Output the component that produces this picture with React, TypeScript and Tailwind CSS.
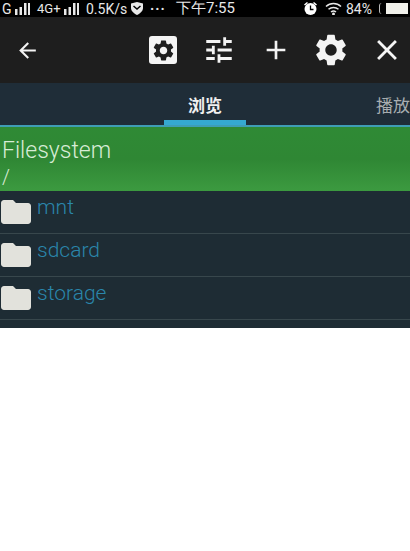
import { MdAdd, MdArrowBack, MdClose, MdFolder, MdSettings, MdTune } from 'react-icons/md';

const folders = ['mnt', 'sdcard', 'storage'];

function Bars() {
  return (
    <svg width="15" height="12" viewBox="0 0 15 12" className="fill-[#e8e8e8]">
      <rect x="0" y="6" width="2.500" height="6" />
      <rect x="4.500" y="4" width="2.500" height="8" />
      <rect x="9" y="0" width="2.500" height="12" />
      <rect x="13" y="0" width="2" height="12" />
    </svg>
  );
}

function StatusBar() {
  return (
    <div className="flex h-[17px] items-center overflow-hidden bg-black text-[14px] leading-none text-[#e8e8e8]">
      <span className="ml-[2px] w-[12px] shrink-0">G</span>
      <span className="ml-[1px]"><Bars /></span>
      <span className="ml-[7px] w-[25px] shrink-0 text-[13px]">4G+</span>
      <span className="ml-[2px]"><Bars /></span>
      <span className="ml-[7px] w-[44px] shrink-0">0.5K/s</span>
      <svg width="14" height="13" viewBox="0 0 14 13" className="shrink-0 fill-[#e8e8e8]">
        <path d="M1 1.500 7 0l6 1.500V6c0 3-3 5.500-6 7-3-1.500-6-4-6-7z" />
        <path d="M3.500 4 7 7l3.500-3" fill="none" stroke="#000" strokeWidth="1.500" />
      </svg>
      <span className="ml-[6px] w-[18px] shrink-0 font-bold tracking-[1px]">···</span>
      <span className="ml-[8px] w-[60px] shrink-0 text-[15px]">下午7:55</span>
      <svg width="15" height="15" viewBox="0 0 15 15" className="ml-[67px] shrink-0 fill-white">
        <circle cx="7.500" cy="8" r="6" />
        <path d="M1 3.500 4 1l1 1-3 2.500zM14 3.500 11 1l-1 1 3 2.500z" />
        <path d="M7.500 4.500V8.500H10.500" fill="none" stroke="#000" strokeWidth="1.300" />
      </svg>
      <svg width="18" height="13" viewBox="0 0 18 13" className="ml-[7px] shrink-0" fill="none" stroke="#e8e8e8" strokeWidth="1.500">
        <path d="M1 4.500a11 11 0 0 1 15 0" />
        <path d="M3.500 7.300a7.500 7.500 0 0 1 10 0" />
        <path d="M6 10a4 4 0 0 1 5 0" />
        <circle cx="8.500" cy="12" r="0.700" fill="#e8e8e8" />
      </svg>
      <span className="ml-[3px] w-[28px] shrink-0">84%</span>
      <div className="ml-[5px] flex h-[11px] w-[29px] shrink-0 justify-end rounded-l-[3px] border-l border-[#bbbbbb] bg-black">
        <div className="w-[22px] bg-[#f0f0ea]" />
      </div>
    </div>
  );
}

function Toolbar() {
  return (
    <div className="flex h-[66px] items-center bg-[#1e1e1e] text-[#f4f4f4]">
      <MdArrowBack className="ml-[15px] shrink-0 text-[25px]" />
      <div className="ml-[109px] flex h-[28px] w-[28px] shrink-0 items-center justify-center rounded-[3px] bg-[#f4f4f4]">
        <MdSettings className="text-[25px] text-[#1e1e1e]" />
      </div>
      <MdTune className="ml-[25px] shrink-0 text-[34px]" />
      <MdAdd className="ml-[24px] shrink-0 text-[32px]" />
      <MdSettings className="ml-[20px] shrink-0 text-[38px]" />
      <MdClose className="ml-[20px] shrink-0 text-[34px]" />
    </div>
  );
}

function Tabs() {
  return (
    <div className="h-[44px] overflow-hidden border-b-2 border-[#3f9db5] bg-[#1f2d38]">
      <div className="flex h-[42px] pl-[164px] font-['Noto_Sans_CJK_SC',sans-serif] text-[17px]">
        <div className="flex w-[82px] shrink-0 justify-center border-b-[5px] border-[#35a9d0] pt-[11px] leading-[22px] font-bold text-[#f0f0f0]">
          浏览
        </div>
        <div className="ml-[130px] w-[82px] shrink-0 pt-[11px] leading-[22px] text-[#a8adb0]">播放</div>
      </div>
    </div>
  );
}

export default function App() {
  return (
    <div className="h-[551px] w-[410px] overflow-hidden bg-white font-['Roboto',sans-serif]">
      <StatusBar />
      <Toolbar />
      <Tabs />
      <div className="h-[64px] bg-gradient-to-b from-[#2f8a35] via-[#2f8734] to-[#3c9a40] pl-[2px] font-light text-[#d8ecd6]">
        <div className="pt-[8px] text-[23px] leading-[31px]">Filesystem</div>
        <div className="text-[20px] leading-[22px]">/</div>
      </div>
      <div className="h-[137px] bg-[#1e2c34]">
        {folders.map((name) => (
          <div key={name} className="flex h-[43px] items-start border-b border-[#38474c]">
            <MdFolder className="mt-[3px] -ml-[2px] shrink-0 text-[36px] text-[#e2e2dc]" />
            <span className="ml-[3px] pt-[2px] text-[21px] leading-[28px] font-light text-[#2a86ab]">{name}</span>
          </div>
        ))}
      </div>
    </div>
  );
}
